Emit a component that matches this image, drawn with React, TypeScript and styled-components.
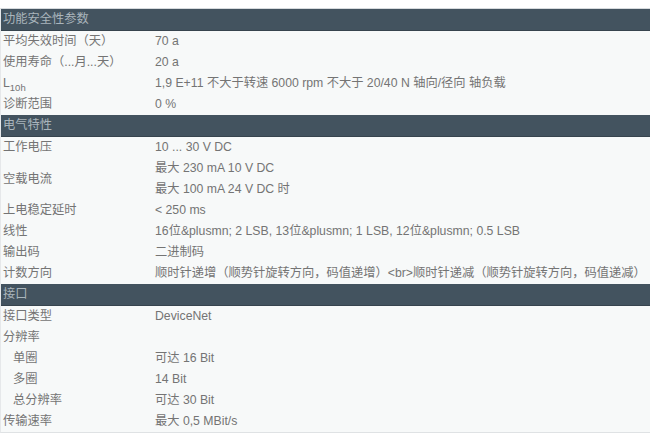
import React from 'react';
import styled, { createGlobalStyle } from 'styled-components';

const GlobalStyle = createGlobalStyle`
    html, body {
        margin: 0;
        padding: 0;
        background: #ffffff;
    }
    body {
        font-family: "Liberation Sans", Arial, "Noto Sans CJK SC", sans-serif;
        font-size: 12.25px;
        color: #747474;
    }
`;

const Page = styled.div`
    padding-top: 8px;
    width: 650px;
    overflow: hidden;
`;

const Sheet = styled.div`
    display: flex;
    flex-direction: column;
    border-top: 1px solid #d6dadd;
    border-bottom: 1px solid #dfe2e4;
    border-left: 1px solid #e6e8ea;
    background: #f7f9f9;
`;

const Section = styled.div`
    height: 21px;
    line-height: 21px;
    padding-left: 2px;
    background: #43535f;
    border-bottom: 1px solid #37444e;
    color: #aab5bc;
    white-space: nowrap;
`;

const Row = styled.div`
    display: flex;
    align-items: center;
    min-height: 21px;
`;

const Label = styled.div<{ $indent?: boolean }>`
    width: 154px;
    flex-shrink: 0;
    box-sizing: border-box;
    padding-left: ${p => (p.$indent ? '12px' : '2px')};
    line-height: 21px;
    white-space: nowrap;
`;

const Value = styled.div`
    display: flex;
    flex-direction: column;
    line-height: 21px;
    white-space: nowrap;
`;

const Sub = styled.sub`
    font-size: 9.5px;
    vertical-align: -4px;
    line-height: 0;
`;

type Item = { label: React.ReactNode; values: string[]; indent?: boolean };
type Group = { title: string; items: Item[] };

const groups: Group[] = [
    {
        title: '功能安全性参数',
        items: [
            { label: '平均失效时间（天）', values: ['70 a'] },
            { label: '使用寿命（...月...天）', values: ['20 a'] },
            {
                label: <>L<Sub>10h</Sub></>,
                values: ['1,9 E+11 不大于转速 6000 rpm 不大于 20/40 N 轴向/径向 轴负载'],
            },
            { label: '诊断范围', values: ['0 %'] },
        ],
    },
    {
        title: '电气特性',
        items: [
            { label: '工作电压', values: ['10 ... 30 V DC'] },
            { label: '空载电流', values: ['最大 230 mA 10 V DC', '最大 100 mA 24 V DC 时'] },
            { label: '上电稳定延时', values: ['< 250 ms'] },
            { label: '线性', values: ['16位&plusmn; 2 LSB, 13位&plusmn; 1 LSB, 12位&plusmn; 0.5 LSB'] },
            { label: '输出码', values: ['二进制码'] },
            {
                label: '计数方向',
                values: ['顺时针递增（顺势针旋转方向，码值递增）<br>顺时针递减（顺势针旋转方向，码值递减）'],
            },
        ],
    },
    {
        title: '接口',
        items: [
            { label: '接口类型', values: ['DeviceNet'] },
            { label: '分辨率', values: [''] },
            { label: '单圈', values: ['可达 16 Bit'], indent: true },
            { label: '多圈', values: ['14 Bit'], indent: true },
            { label: '总分辨率', values: ['可达 30 Bit'], indent: true },
            { label: '传输速率', values: ['最大 0,5 MBit/s'] },
        ],
    },
];

export default function App() {
    return (
        <Page>
            <GlobalStyle />
            <Sheet>
                {groups.map(g => (
                    <React.Fragment key={g.title}>
                        <Section>{g.title}</Section>
                        {g.items.map((it, i) => (
                            <Row key={i}>
                                <Label $indent={it.indent}>{it.label}</Label>
                                <Value>
                                    {it.values.map((v, j) => (
                                        <span key={j}>{v || '\u00a0'}</span>
                                    ))}
                                </Value>
                            </Row>
                        ))}
                    </React.Fragment>
                ))}
            </Sheet>
        </Page>
    );
}
